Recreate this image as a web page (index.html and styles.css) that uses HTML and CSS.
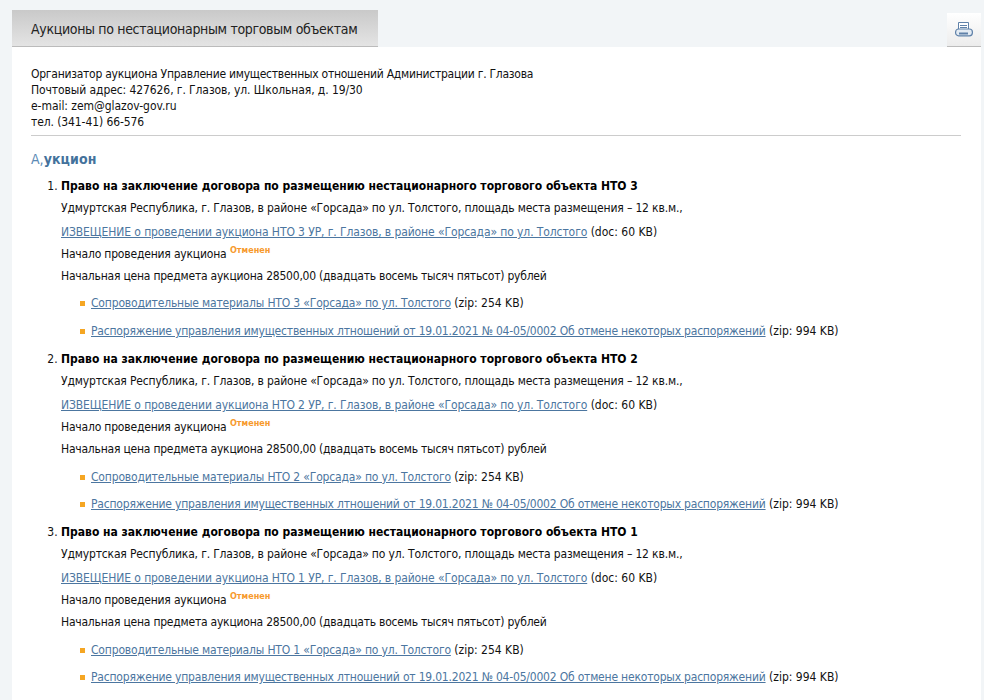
FILE: index.html
```html
<!DOCTYPE html>
<html lang="ru">
<head>
<meta charset="utf-8">
<title>Аукционы</title>
<link rel="stylesheet" href="styles.css">
</head>
<body>
<div class="page">
  <header class="top">
    <h1 class="tab">Аукционы по нестационарным торговым объектам</h1>
    <button class="print" aria-label="Печать">
      <svg width="18" height="15" viewBox="0 0 18 15"><path d="M3.500 0.500h10v7h-10z" fill="#fff" stroke="#5f81a9"/><path d="M5 3.500h7M5 5.500h7" stroke="#5f81a9"/><rect x="0.600" y="7" width="16.800" height="6.800" rx="3" fill="#e3ebf3" stroke="#5f81a9" stroke-width="1.200"/><path d="M4 11.500h9" stroke="#5f81a9" stroke-width="2"/></svg>
    </button>
  </header>
  <main class="content">
    <div class="org">
      <span class="t-org">Организатор аукциона Управление имущественных отношений Администрации г. Глазова</span><br>
      <span class="t-post">Почтовый адрес: 427626, г. Глазов, ул. Школьная, д. 19/30</span><br>
      <span class="t-mail">e-mail: zem@glazov-gov.ru</span><br>
      <span class="t-tel">тел. (341-41) 66-576</span>
    </div>
    <h2 class="heading">А,<b>укцион</b></h2>
    <ol class="lots">
      <li class="lot">
        <p class="title">Право на заключение договора по размещению нестационарного торгового объекта НТО 3</p>
        <p class="row t-addr">Удмуртская Республика, г. Глазов, в районе «Горсада» по ул. Толстого, площадь места размещения – 12 кв.м.,</p>
        <p class="row link"><a class="t-doc" href="#">ИЗВЕЩЕНИЕ о проведении аукциона НТО 3 УР, г. Глазов, в районе «Горсада» по ул. Толстого</a> (doc: 60 KB)</p>
        <p class="row"><span class="t-start">Начало проведения аукциона</span> <sup class="cancel">Отменен</sup></p>
        <p class="row t-price">Начальная цена предмета аукциона 28500,00 (двадцать восемь тысяч пятьсот) рублей</p>
        <ul class="files">
          <li><a class="t-file" href="#">Сопроводительные материалы НТО 3 «Горсада» по ул. Толстого</a> (zip: 254 KB)</li>
          <li><a class="t-order" href="#">Распоряжение управления имущественных лтношений от 19.01.2021 № 04-05/0002 Об отмене некоторых распоряжений</a> (zip: 994 KB)</li>
        </ul>
      </li>
      <li class="lot">
        <p class="title">Право на заключение договора по размещению нестационарного торгового объекта НТО 2</p>
        <p class="row t-addr">Удмуртская Республика, г. Глазов, в районе «Горсада» по ул. Толстого, площадь места размещения – 12 кв.м.,</p>
        <p class="row link"><a class="t-doc" href="#">ИЗВЕЩЕНИЕ о проведении аукциона НТО 2 УР, г. Глазов, в районе «Горсада» по ул. Толстого</a> (doc: 60 KB)</p>
        <p class="row"><span class="t-start">Начало проведения аукциона</span> <sup class="cancel">Отменен</sup></p>
        <p class="row t-price">Начальная цена предмета аукциона 28500,00 (двадцать восемь тысяч пятьсот) рублей</p>
        <ul class="files">
          <li><a class="t-file" href="#">Сопроводительные материалы НТО 2 «Горсада» по ул. Толстого</a> (zip: 254 KB)</li>
          <li><a class="t-order" href="#">Распоряжение управления имущественных лтношений от 19.01.2021 № 04-05/0002 Об отмене некоторых распоряжений</a> (zip: 994 KB)</li>
        </ul>
      </li>
      <li class="lot">
        <p class="title">Право на заключение договора по размещению нестационарного торгового объекта НТО 1</p>
        <p class="row t-addr">Удмуртская Республика, г. Глазов, в районе «Горсада» по ул. Толстого, площадь места размещения – 12 кв.м.,</p>
        <p class="row link"><a class="t-doc" href="#">ИЗВЕЩЕНИЕ о проведении аукциона НТО 1 УР, г. Глазов, в районе «Горсада» по ул. Толстого</a> (doc: 60 KB)</p>
        <p class="row"><span class="t-start">Начало проведения аукциона</span> <sup class="cancel">Отменен</sup></p>
        <p class="row t-price">Начальная цена предмета аукциона 28500,00 (двадцать восемь тысяч пятьсот) рублей</p>
        <ul class="files">
          <li><a class="t-file" href="#">Сопроводительные материалы НТО 1 «Горсада» по ул. Толстого</a> (zip: 254 KB)</li>
          <li><a class="t-order" href="#">Распоряжение управления имущественных лтношений от 19.01.2021 № 04-05/0002 Об отмене некоторых распоряжений</a> (zip: 994 KB)</li>
        </ul>
      </li>
    </ol>
  </main>
</div>
</body>
</html>
```
FILE: styles.css
```css
* { box-sizing: border-box; }
html, body { margin: 0; height: 700px; overflow: hidden; }
body { background: #f2f5f7; font: 12px/16px "DejaVu Sans", sans-serif; font-stretch: condensed; color: #111; }
.page { width: 969px; margin-left: 12px; }
.top { display: flex; justify-content: space-between; align-items: flex-start; height: 47px; padding-top: 10px; }
.tab { margin: 0; width: 366px; height: 37px; padding-left: 19px; font-size: 14px; font-weight: 400; line-height: 39px; letter-spacing: -0.33px; color: #222; background: linear-gradient(#c9c9c9, #e4e4e4); border-bottom: 1px solid #bbb; white-space: nowrap; }
.print { display: flex; align-items: center; justify-content: center; width: 34px; height: 34px; margin-top: 3px; padding: 0; border: 0; border-bottom: 1px solid #bbb; background: linear-gradient(#fff, #ececec); font: inherit; }
.content { background: #fff; padding: 19px 20px 0 19px; height: 653px; overflow: hidden; }
.org { padding-bottom: 5px; border-bottom: 1px solid #ccc; }
.heading { margin: 14px 0 0; font-size: 14px; line-height: 18px; font-weight: 400; color: #5b8ab5; }
.heading b { color: #44729c; letter-spacing: 0.1px; }
.lots { margin: 10px 0 0; padding: 0 0 0 30px; }
.lot { height: 173.2px; }
.title { margin: 0; height: 22px; font-weight: 700; color: #000; }
.row { margin: 0; height: 22px; }
.row.link { margin-top: 2px; }
.row a, .files a { color: #4c76a0; }
.cancel { font-size: 9px; font-weight: 700; color: #f79a2e; line-height: 0; }
.files { list-style: none; margin: 5.4px 0 0; padding: 0 0 0 30px; }
.files li { position: relative; height: 27.6px; }
.files li::before { content: ""; position: absolute; left: -11px; top: 6px; width: 5px; height: 5px; background: #f5a623; }
.t-org { letter-spacing: -0.25px; }
.t-post { letter-spacing: -0.09px; }
.t-mail { letter-spacing: -0.05px; }
.t-tel { letter-spacing: -0.1px; }
.t-addr { letter-spacing: -0.16px; }
.t-doc { letter-spacing: -0.1px; }
.t-start { letter-spacing: -0.19px; }
.t-price { letter-spacing: -0.22px; }
.t-file { letter-spacing: -0.17px; }
.t-order { letter-spacing: -0.197px; }
```
